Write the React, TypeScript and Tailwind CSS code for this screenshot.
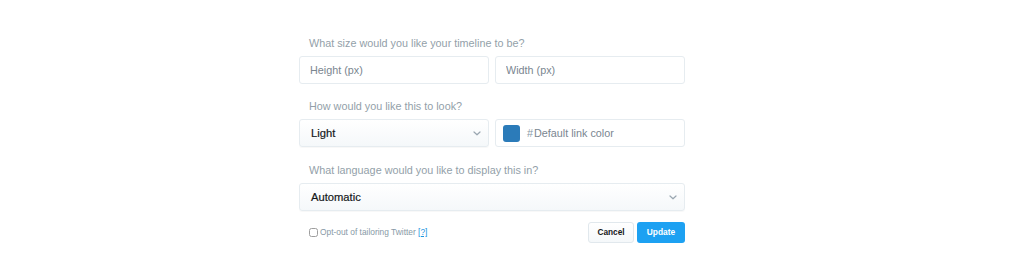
import { useState } from 'react';

const FONT = { fontFamily: '"Liberation Sans", Arial, sans-serif' };

function Chevron() {
  return (
    <svg width="8" height="5" viewBox="0 0 8 5" className="shrink-0">
      <path d="M1 1 L4 3.8 L7 1" fill="none" stroke="#9aa6b0" strokeWidth="1.2" strokeLinecap="round" strokeLinejoin="round" />
    </svg>
  );
}

function Label({ children }: { children: string }) {
  return <div className="pl-[10px] h-[18px] leading-[18px] text-[10.8px] text-[#939fa9]">{children}</div>;
}

function FakeSelect({ value }: { value: string }) {
  return (
    <div className="h-[28px] flex items-center justify-between pl-[11px] pr-[7px] rounded-[3px] border border-[#e6ecf0] bg-gradient-to-b from-white to-[#f5f8fa] shadow-[0_1px_1px_rgba(0,0,0,0.03)] cursor-pointer">
      <span className="text-[11.2px] text-[#14171a] [-webkit-text-stroke:0.2px_#14171a]">{value}</span>
      <Chevron />
    </div>
  );
}

export default function App() {
  const [height, setHeight] = useState('');
  const [width, setWidth] = useState('');
  const [color, setColor] = useState('');
  const [optOut, setOptOut] = useState(false);

  return (
    <div className="w-[1024px] h-[278px] bg-white pt-[34px]" style={FONT}>
      <div className="ml-[299px] w-[386px]">
        <Label>What size would you like your timeline to be?</Label>
        <div className="mt-1 grid grid-cols-2 gap-[6px]">
          <input
            value={height}
            onChange={(e) => setHeight(e.target.value)}
            placeholder="Height (px)"
            className="h-[28px] px-[10px] rounded-[3px] border border-[#e6ecf0] bg-white text-[10.8px] text-[#14171a] placeholder:text-[#7a8690] outline-none"
          />
          <input
            value={width}
            onChange={(e) => setWidth(e.target.value)}
            placeholder="Width (px)"
            className="h-[28px] px-[10px] rounded-[3px] border border-[#e6ecf0] bg-white text-[10.8px] text-[#14171a] placeholder:text-[#7a8690] outline-none"
          />
        </div>

        <div className="mt-[13px]">
          <Label>How would you like this to look?</Label>
        </div>
        <div className="mt-1 grid grid-cols-2 gap-[6px]">
          <FakeSelect value="Light" />
          <div className="h-[28px] flex items-center pl-[7px] rounded-[3px] border border-[#e6ecf0] bg-white">
            <span className="w-[17px] h-[17px] rounded-[3px] bg-[#2b7bb9] shrink-0" />
            <span className="ml-[7px] text-[10.8px] text-[#8899a6]">#</span>
            <input
              value={color}
              onChange={(e) => setColor(e.target.value)}
              placeholder="Default link color"
              className="ml-[1px] flex-1 min-w-0 bg-transparent text-[10.8px] text-[#14171a] placeholder:text-[#7a8690] outline-none"
            />
          </div>
        </div>

        <div className="mt-[14px]">
          <Label>What language would you like to display this in?</Label>
        </div>
        <div className="mt-1">
          <FakeSelect value="Automatic" />
        </div>

        <div className="mt-[11px] flex items-center justify-between">
          <label className="pl-[10px] flex items-center gap-[2px] text-[8.4px] text-[#8899a6] cursor-pointer">
            <input
              type="checkbox"
              checked={optOut}
              onChange={(e) => setOptOut(e.target.checked)}
              className="w-[9px] h-[9px] m-0 opacity-70"
            />
            <span>
              Opt-out of tailoring Twitter <a className="text-[#1b95e0] underline">[?]</a>
            </span>
          </label>
          <div className="flex gap-[3px]">
            <button className="w-[46px] h-[21px] rounded-[3px] border border-[#e1e8ed] bg-gradient-to-b from-white to-[#f5f8fa] text-[8.3px] font-bold text-[#14171a]">
              Cancel
            </button>
            <button className="w-[48px] h-[21px] rounded-[3px] bg-[#1da1f2] text-[8.4px] font-bold text-white">
              Update
            </button>
          </div>
        </div>
      </div>
    </div>
  );
}
